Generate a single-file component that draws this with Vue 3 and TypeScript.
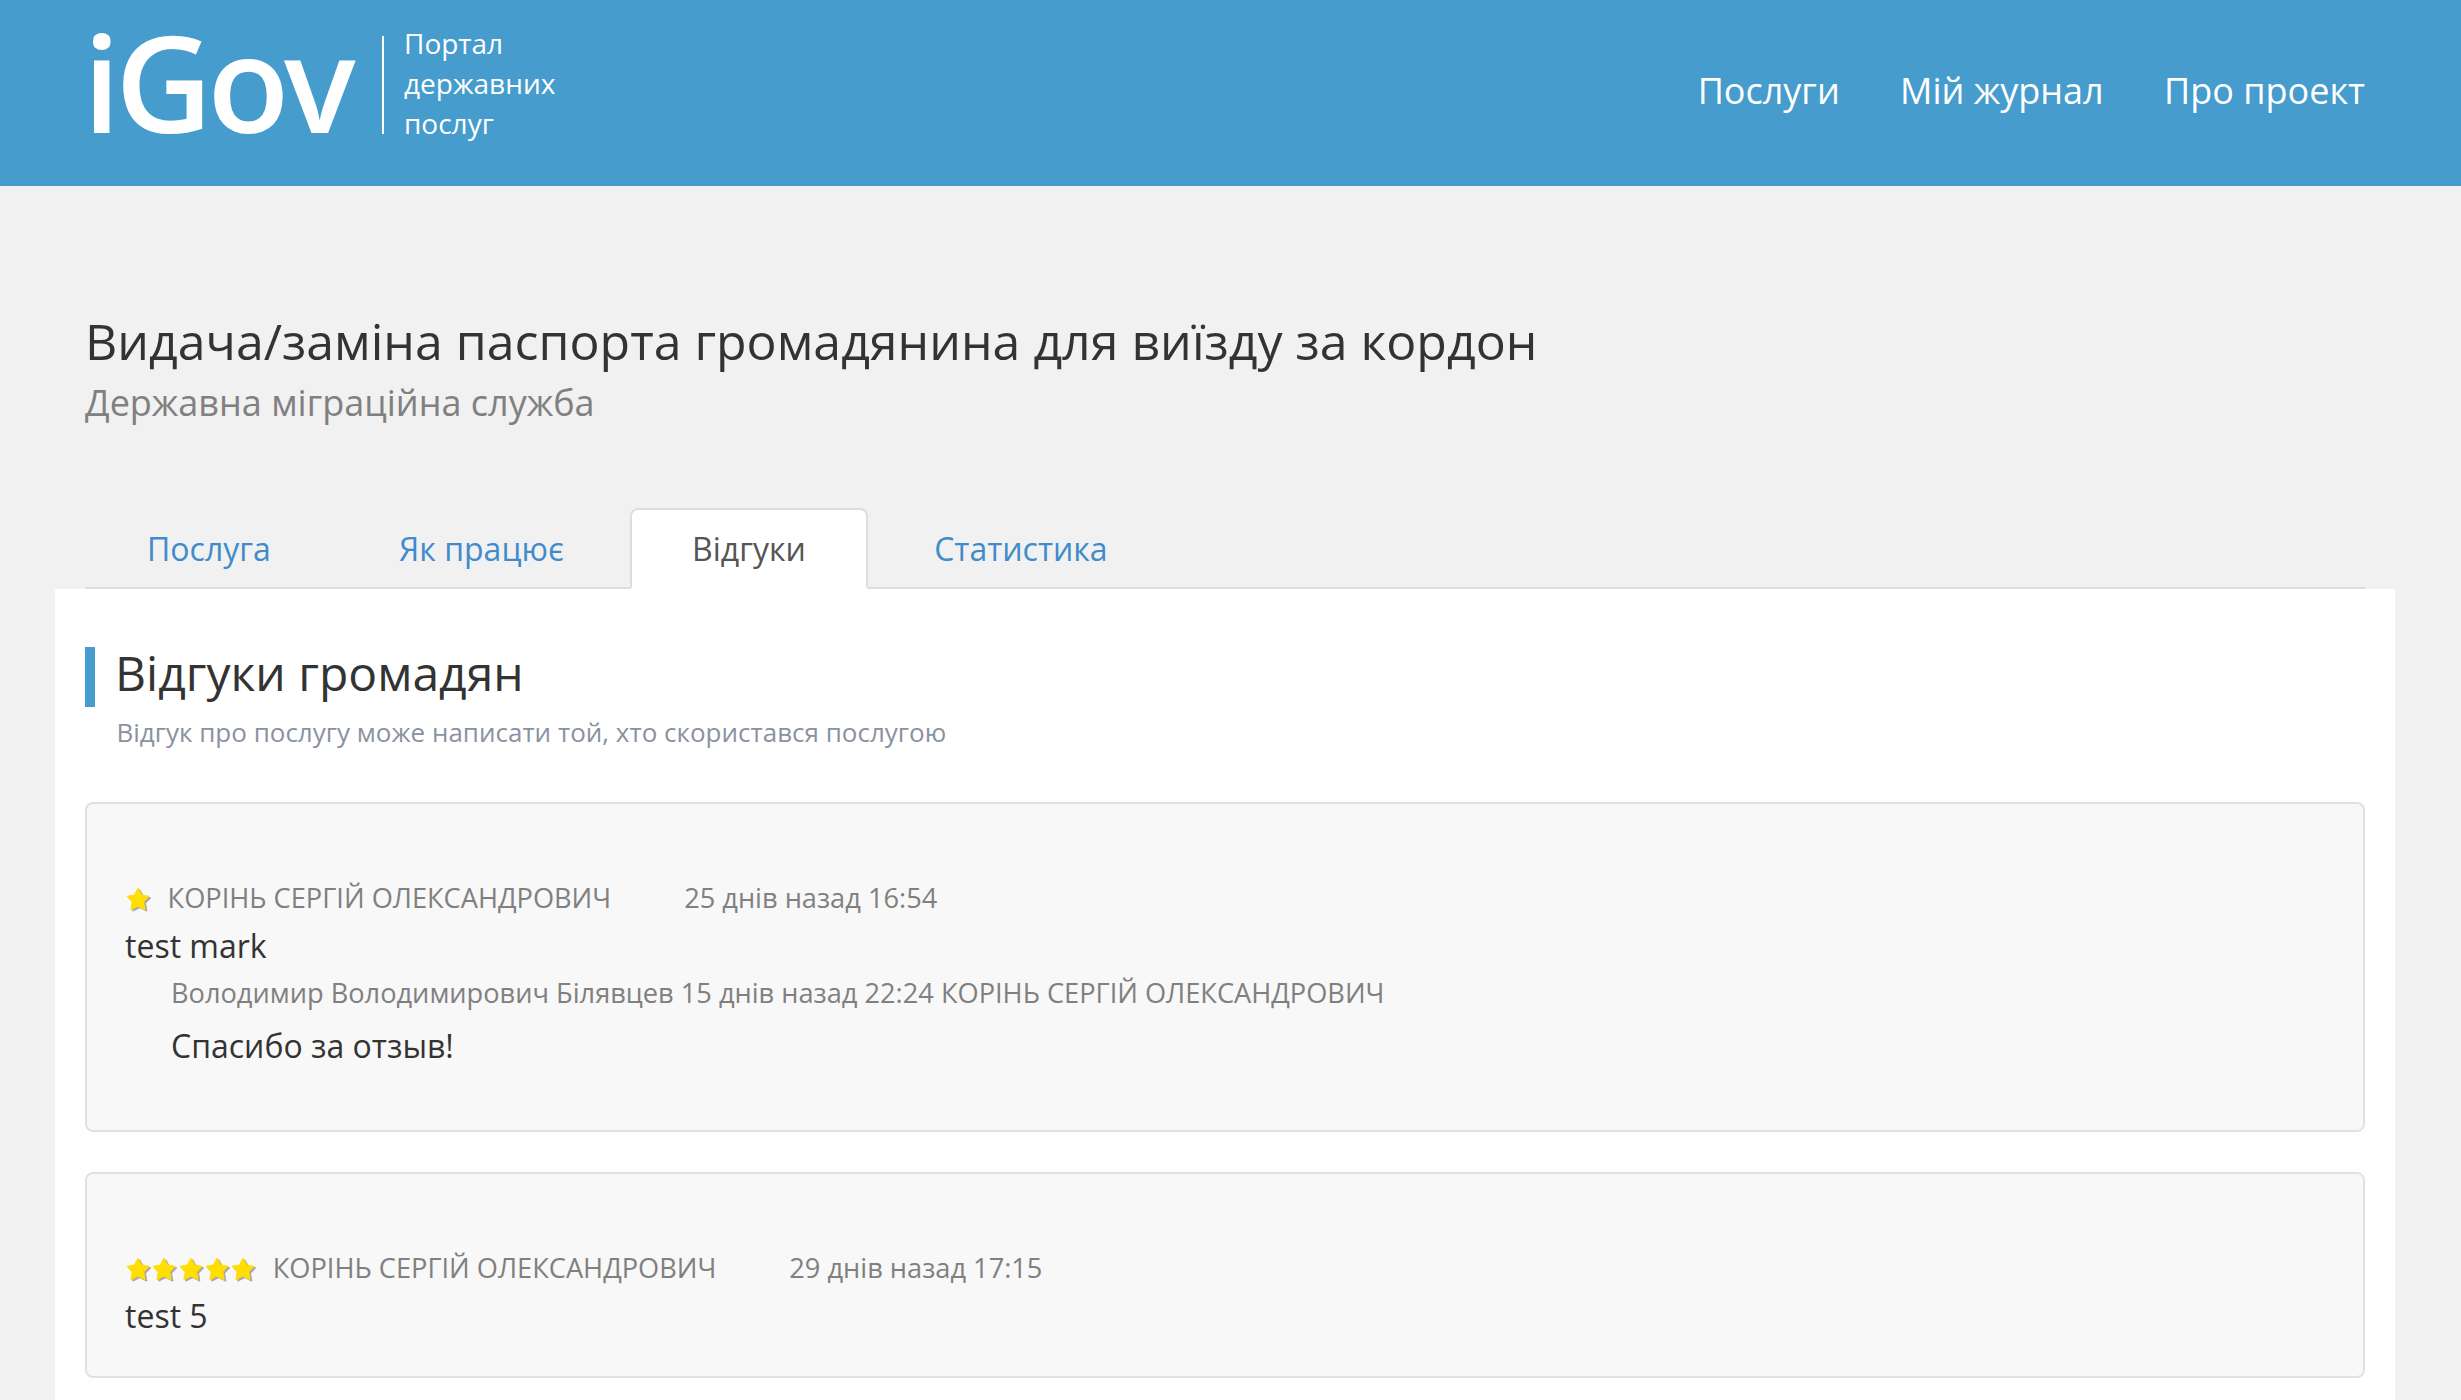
<script setup lang="ts">
import { ref } from 'vue'

interface Reply {
  meta: string
  text: string
}

interface Review {
  stars: number
  author: string
  date: string
  text: string
  reply?: Reply
}

const nav: string[] = ['Послуги', 'Мій журнал', 'Про проект']
const tabs: string[] = ['Послуга', 'Як працює', 'Відгуки', 'Статистика']
const activeTab = ref(2)

const reviews: Review[] = [
  {
    stars: 1,
    author: 'КОРІНЬ СЕРГІЙ ОЛЕКСАНДРОВИЧ',
    date: '25 днів назад 16:54',
    text: 'test mark',
    reply: {
      meta: 'Володимир Володимирович Білявцев 15 днів назад 22:24 КОРІНЬ СЕРГІЙ ОЛЕКСАНДРОВИЧ',
      text: 'Спасибо за отзыв!',
    },
  },
  {
    stars: 5,
    author: 'КОРІНЬ СЕРГІЙ ОЛЕКСАНДРОВИЧ',
    date: '29 днів назад 17:15',
    text: 'test 5',
  },
]

const starPoints = '13,1.5 16.5,8 23.7,9.4 18.6,14.7 19.9,22.4 13,19 6.1,22.4 7.4,14.7 2.3,9.4 9.5,8'
</script>

<template>
  <div class="page">
    <header class="header">
      <div class="brand">
        <span class="logo">iGov</span>
        <span class="divider"></span>
        <span class="tagline">Портал<br />державних<br />послуг</span>
      </div>
      <nav class="nav">
        <a v-for="item in nav" :key="item" class="nav-link">{{ item }}</a>
      </nav>
    </header>

    <section class="intro">
      <h1 class="title">Видача/заміна паспорта громадянина для виїзду за кордон</h1>
      <p class="subtitle">Державна міграційна служба</p>
      <ul class="tabs">
        <li
          v-for="(tab, i) in tabs"
          :key="tab"
          :class="['tab', { active: i === activeTab }]"
          @click="activeTab = i"
        >{{ tab }}</li>
      </ul>
    </section>

    <main class="panel">
      <h2 class="heading">Відгуки громадян</h2>
      <p class="hint">Відгук про послугу може написати той, хто скористався послугою</p>

      <article v-for="review in reviews" :key="review.date" class="review">
        <div class="meta">
          <span class="stars">
            <svg v-for="n in review.stars" :key="n" class="star" viewBox="0 0 26.3 26">
              <polygon :points="starPoints" transform="translate(1.8 1.5)" fill="#aca6ae" stroke="#aca6ae" />
              <polygon :points="starPoints" fill="#ffde00" stroke="#ffde00" />
            </svg>
          </span>
          <span class="author">{{ review.author }}</span>
          <span class="date">{{ review.date }}</span>
        </div>
        <p class="text">{{ review.text }}</p>
        <div v-if="review.reply" class="reply">
          <p class="reply-meta">{{ review.reply.meta }}</p>
          <p class="text reply-text">{{ review.reply.text }}</p>
        </div>
      </article>
    </main>
  </div>
</template>

<style>
body {
  margin: 0;
  background: #f1f1f1;
}
</style>

<style scoped>
.page {
  box-sizing: border-box;
  width: 2461px;
  height: 1400px;
  overflow: hidden;
  display: flex;
  flex-direction: column;
  background: #f1f1f1;
  color: #333;
  font-family: 'Open Sans', 'Noto Sans', sans-serif;
}

.header {
  box-sizing: border-box;
  flex: none;
  display: flex;
  justify-content: space-between;
  align-items: flex-start;
  height: 186px;
  padding: 0 96px 0 83px;
  background: #459ccd;
  color: #fff;
}

.brand {
  display: flex;
  align-items: flex-start;
}

.logo {
  width: 299px;
  font-size: 134px;
  font-weight: 600;
  line-height: 163px;
  letter-spacing: -5.1px;
}

.divider {
  width: 2px;
  height: 98px;
  margin-top: 36px;
  background: #fff;
}

.tagline {
  margin: 23px 0 0 20px;
  font-size: 28px;
  line-height: 40px;
}

.nav {
  display: flex;
  gap: 60.3px;
  margin-top: 66px;
  font-size: 36px;
  line-height: 50px;
}

.intro {
  flex: none;
  padding: 125px 96px 0 85px;
}

.title {
  margin: 0;
  font-size: 50px;
  font-weight: 400;
  line-height: 60px;
}

.subtitle {
  margin: 7px 0 0;
  color: #808080;
  font-size: 36px;
  line-height: 50px;
}

.tabs {
  display: flex;
  gap: 4.3px;
  margin: 80px 0 0;
  padding: 0;
  list-style: none;
  box-shadow: inset 0 -2px 0 #ddd;
}

.tab {
  padding: 0 60px;
  border: 2px solid transparent;
  border-radius: 8px 8px 0 0;
  color: #428bca;
  font-size: 32px;
  line-height: 77px;
}

.tab.active {
  border-color: #ddd #ddd #fff;
  background: #fff;
  color: #555;
}

.panel {
  flex: 1;
  margin: 0 66px 0 55px;
  padding: 58px 30px 0;
  background: #fff;
}

.heading {
  box-sizing: border-box;
  height: 60px;
  margin: 0;
  padding-left: 20px;
  border-left: 10px solid #459ccd;
  font-size: 48px;
  font-weight: 400;
  line-height: 51px;
}

.hint {
  margin: 7px 0 52px 31.5px;
  color: #8a92a0;
  font-size: 26px;
  line-height: 36px;
}

.review {
  margin-bottom: 40px;
  padding: 74px 38px 37px;
  border: 2px solid #e1e1e1;
  border-radius: 8px;
  background: #f8f8f8;
}

.review:has(.reply) {
  padding-bottom: 61px;
}

.meta {
  display: flex;
  align-items: flex-start;
  color: #808080;
  font-size: 27.2px;
  line-height: 40px;
}

.stars {
  display: flex;
  margin: 9px 16.3px 0 0;
}

.star {
  display: block;
  width: 26.3px;
  height: 26px;
  stroke-width: 1.2;
  stroke-linejoin: round;
}

.date {
  margin-left: 73px;
}

.text {
  margin: 5px 0 0;
  font-size: 32px;
  line-height: 46px;
}

.reply {
  margin: 4px 0 0 46px;
}

.reply-meta {
  margin: 0;
  color: #808080;
  font-size: 27.2px;
  line-height: 40px;
}

.reply-text {
  margin-top: 10px;
}
</style>
